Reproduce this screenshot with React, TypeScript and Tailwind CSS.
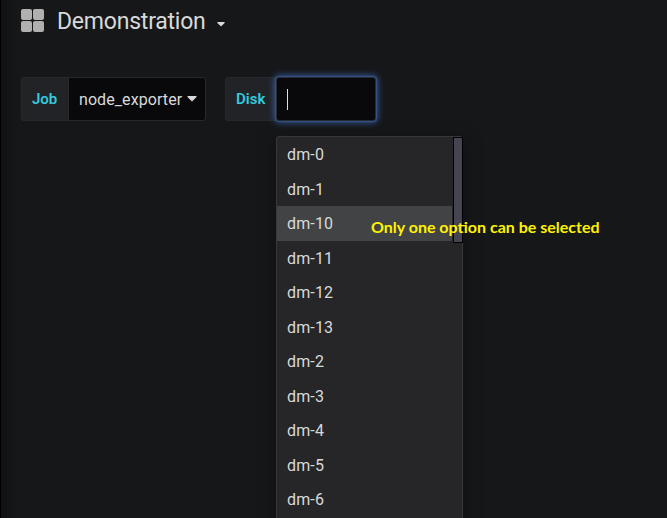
const disks = ['dm-0', 'dm-1', 'dm-10', 'dm-11', 'dm-12', 'dm-13', 'dm-2', 'dm-3', 'dm-4', 'dm-5', 'dm-6'];

function Caret({ className }: { className: string }) {
  return (
    <svg viewBox="0 0 10 6" className={className} fill="currentColor" aria-hidden="true">
      <path d="M1 0h8q1 0 .5 1L5.6 5q-.6.6-1.2 0L.5 1Q0 0 1 0Z" />
    </svg>
  );
}

function Header() {
  return (
    <header className="flex h-[41px] items-center pl-5">
      <div className="grid grid-cols-2 gap-px">
        {[0, 1, 2, 3].map((n) => (
          <span key={n} className="size-[11px] rounded-[2px] bg-[#b0b0b0]" />
        ))}
      </div>
      <h1 className="ml-[13px] pt-px text-[23px] leading-none tracking-[-0.22px] text-[#d8d9da]">Demonstration</h1>
      <Caret className="mt-[8px] ml-[11px] h-[5px] w-2 text-[#d8d9da]" />
    </header>
  );
}

function Label({ children, width }: { children: string; width: string }) {
  return (
    <label
      className={`flex h-11 items-center rounded-l-[3px] border border-r-0 border-[#27282b] bg-[#212327] pl-[10px] text-[15px] font-semibold text-[#33c9dc] ${width}`}
    >
      {children}
    </label>
  );
}

function DiskMenu() {
  return (
    <div className="absolute top-[59px] left-0 h-[390px] w-[187px] rounded-t-[3px] border border-[#38383b] bg-[#262628] text-[16px] tracking-[0.15px] text-[#d8d9da] shadow-[0_5px_20px_rgba(0,0,0,0.35)]">
      <ul>
        {disks.map((disk) => (
          <li
            key={disk}
            className={`flex h-[34.5px] w-[175px] items-center pt-[2px] pl-[10px] ${disk === 'dm-10' ? 'bg-[#424345]' : ''}`}
          >
            {disk}
          </li>
        ))}
      </ul>
      <div className="absolute top-0 right-[-1px] h-[106px] w-[10px] border border-black bg-[#444453]" />
    </div>
  );
}

export default function App() {
  return (
    <main className="relative h-[518px] w-[667px] overflow-hidden border-l border-black bg-[#161719] bg-linear-to-r from-[#101113] from-0% to-[#161719] to-[18px] font-['Roboto',sans-serif]">
      <Header />
      <div className="mt-9 flex gap-[19px] pl-5">
        <div className="flex">
          <Label width="w-[47px]">Job</Label>
          <button className="flex h-11 w-[138px] items-center rounded-r-[3px] border border-[#27282b] bg-[#09090b] pt-px pl-[10px] text-[16px] tracking-[0.08px] text-[#d8d9da]">
            node_exporter
            <Caret className="mb-[2px] ml-[5px] h-[6px] w-[10px]" />
          </button>
        </div>
        <div className="flex">
          <Label width="w-[51px]">Disk</Label>
          <div className="relative">
            <div className="flex h-11 w-[100px] items-center rounded-[3px] border border-[#292b31] bg-[#09090b] pl-[10px] shadow-[0_0_1px_1px_#33548a,0_0_7px_1px_#3c66b0]">
              <span className="h-[21px] w-px bg-[#e0e0e0]" />
            </div>
            <DiskMenu />
          </div>
        </div>
      </div>
      <p className="absolute top-[217px] left-[370px] font-['Lato',sans-serif] text-[16px] leading-5 font-bold whitespace-nowrap text-[#fff200]">
        Only one option can be selected
      </p>
    </main>
  );
}
